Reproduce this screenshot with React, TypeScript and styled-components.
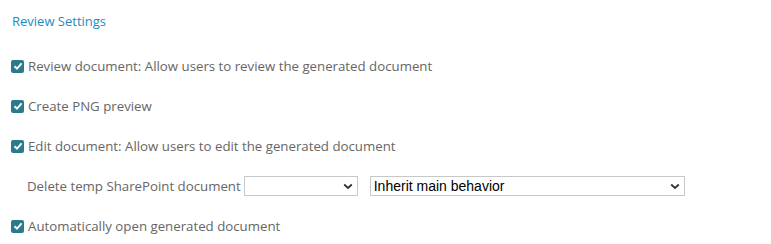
import React from "react";
import styled, { createGlobalStyle } from "styled-components";

const Global = createGlobalStyle`
  body { margin: 0; background: #fff; font-family: "Open Sans", "Noto Sans", sans-serif; }
`;

const Page = styled.div`
  padding: 12px 12px 0 11px;
  display: flex;
  flex-direction: column;
`;

const Heading = styled.div`
  color: #1a8cc3;
  font-size: 13px;
  line-height: 18px;
  margin-left: 1px;
  margin-bottom: 16px;
`;

const Row = styled.label`
  display: flex;
  align-items: center;
  height: 40px;
  color: #666;
  font-size: 13.25px;
  gap: 4px;
`;

const Box = styled.span`
  width: 13px;
  height: 13px;
  border-radius: 2px;
  background: #2b7a8c;
  display: inline-flex;
  align-items: center;
  justify-content: center;
`;

const SubRow = styled.div`
  display: flex;
  align-items: center;
  height: 40px;
  padding-left: 16px;
  color: #666;
  font-size: 13.25px;
`;

const Label = styled.span`
  margin-right: 3px;
`;

const Select = styled.div<{ w: number }>`
  width: ${(p) => p.w}px;
  height: 20px;
  box-sizing: border-box;
  border: 1px solid #c8c8c8;
  display: flex;
  align-items: center;
  justify-content: space-between;
  padding: 0 4px 0 3px;
  font-family: "Liberation Sans", Arial, sans-serif;
  font-size: 14px;
  color: #000;
  margin-right: 12px;
`;

const Check = () => (
  <Box>
    <svg width="10" height="10" viewBox="0 0 10 10">
      <path d="M1.5 5.2 L4 7.6 L8.6 2.4" stroke="#fff" strokeWidth="2" fill="none" />
    </svg>
  </Box>
);

const Chevron = () => (
  <svg width="10" height="7" viewBox="0 0 10 7">
    <path d="M1.2 1.5 L5 5 L8.8 1.5" stroke="#333" strokeWidth="1.8" fill="none" />
  </svg>
);

export default function App() {
  return (
    <>
      <Global />
      <Page>
        <Heading>Review Settings</Heading>
        <Row><Check />Review document: Allow users to review the generated document</Row>
        <Row><Check />Create PNG preview</Row>
        <Row><Check />Edit document: Allow users to edit the generated document</Row>
        <SubRow>
          <Label>Delete temp SharePoint document</Label>
          <Select w={114}><span></span><Chevron /></Select>
          <Select w={315}><span>Inherit main behavior</span><Chevron /></Select>
        </SubRow>
        <Row><Check />Automatically open generated document</Row>
      </Page>
    </>
  );
}
